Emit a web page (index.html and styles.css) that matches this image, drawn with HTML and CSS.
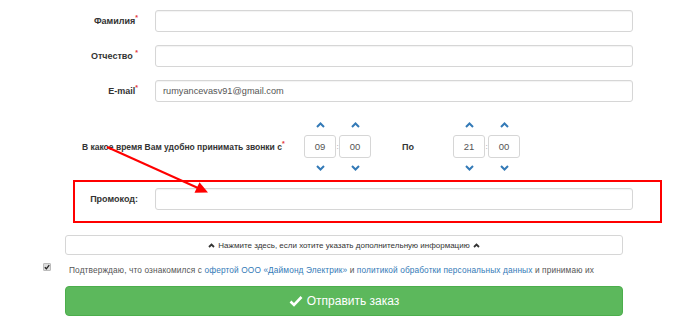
FILE: index.html
```html
<!DOCTYPE html>
<html lang="ru">
<head>
  <meta charset="UTF-8">
  <title>Оформление заказа</title>
  <link rel="stylesheet" href="styles.css">
</head>
<body>
<div class="page">
  <form class="order" onsubmit="return false">
    <div class="row">
      <label class="label" for="last_name">Фамилия<span class="req">*</span></label>
      <input class="field" type="text" id="last_name">
    </div>
    <div class="row">
      <label class="label" for="middle_name">Отчество <span class="req">*</span></label>
      <input class="field" type="text" id="middle_name">
    </div>
    <div class="row">
      <label class="label" for="email">E-mail<span class="req">*</span></label>
      <input class="field" type="text" id="email" value="rumyancevasv91@gmail.com">
    </div>

    <div class="time-row">
      <div class="time-label">В какое время Вам удобно принимать звонки с<span class="req">*</span></div>
      <div class="time-pick">
        <div class="spin">
          <a class="chev"><svg width="9" height="6" viewBox="0 0 9 6"><polyline points="1,5 4.5,1.5 8,5"/></svg></a>
          <input class="time-box" value="09">
          <a class="chev"><svg width="9" height="6" viewBox="0 0 9 6"><polyline points="1,1 4.5,4.5 8,1"/></svg></a>
        </div>
        <span class="colon">:</span>
        <div class="spin">
          <a class="chev"><svg width="9" height="6" viewBox="0 0 9 6"><polyline points="1,5 4.5,1.5 8,5"/></svg></a>
          <input class="time-box" value="00">
          <a class="chev"><svg width="9" height="6" viewBox="0 0 9 6"><polyline points="1,1 4.5,4.5 8,1"/></svg></a>
        </div>
      </div>
      <div class="time-to">По</div>
      <div class="time-pick">
        <div class="spin">
          <a class="chev"><svg width="9" height="6" viewBox="0 0 9 6"><polyline points="1,5 4.5,1.5 8,5"/></svg></a>
          <input class="time-box" value="21">
          <a class="chev"><svg width="9" height="6" viewBox="0 0 9 6"><polyline points="1,1 4.5,4.5 8,1"/></svg></a>
        </div>
        <span class="colon">:</span>
        <div class="spin">
          <a class="chev"><svg width="9" height="6" viewBox="0 0 9 6"><polyline points="1,5 4.5,1.5 8,5"/></svg></a>
          <input class="time-box" value="00">
          <a class="chev"><svg width="9" height="6" viewBox="0 0 9 6"><polyline points="1,1 4.5,4.5 8,1"/></svg></a>
        </div>
      </div>
    </div>

    <div class="promo">
      <div class="row promo-row">
        <label class="label" for="promo">Промокод:</label>
        <input class="field" type="text" id="promo">
      </div>
    </div>

    <button type="button" class="more">
      <svg class="up" width="7" height="5" viewBox="0 0 7 5"><polyline points="1,4 3.5,1.5 6,4"/></svg>
      Нажмите здесь, если хотите указать дополнительную информацию
      <svg class="up" width="7" height="5" viewBox="0 0 7 5"><polyline points="1,4 3.5,1.5 6,4"/></svg>
    </button>

    <div class="agree">
      <span class="check"><svg width="6" height="6" viewBox="0 0 6 6"><polyline points="0.8,3.2 2.4,4.8 5.2,1.2"/></svg></span>
      <span class="agree-text">Подтверждаю, что ознакомился с <a href="#">офертой ООО «Даймонд Электрик»</a> и <a href="#">политикой обработки персональных данных</a> и принимаю их</span>
    </div>

    <button type="submit" class="submit">
      <svg width="14" height="12" viewBox="0 0 14 12"><polyline points="1.5,6.5 5,10 12.5,2"/></svg>
      Отправить заказ
    </button>
  </form>

  <svg class="arrow" width="700" height="331" viewBox="0 0 700 331">
    <line x1="107" y1="147" x2="198" y2="188" stroke="#f00" stroke-width="2"/>
    <polygon points="208,192.5 194.5,192.8 199.5,182.2" fill="#f00"/>
  </svg>
</div>
</body>
</html>
```

FILE: styles.css
```css
body {
  margin: 0;
  font-family: "Liberation Sans", Arial, sans-serif;
  color: #333;
  background: #fff;
}
.page {
  position: relative;
  width: 700px;
  height: 331px;
  overflow: hidden;
}
.order {
  padding-top: 10px;
}
.row {
  display: grid;
  grid-template-columns: 140px 478px;
  column-gap: 15px;
  align-items: center;
  margin-bottom: 13px;
}
.label {
  text-align: right;
  font-weight: bold;
  font-size: 9px;
  padding-right: 2px;
}
.req {
  color: #e4393c;
  font-size: 7px;
  vertical-align: top;
  position: relative;
  top: -2px;
}
.field {
  box-sizing: border-box;
  height: 22px;
  border: 1px solid #d6d6d6;
  border-radius: 3px;
  padding: 0 7px;
  font-family: inherit;
  font-size: 9.2px;
  color: #555;
  box-shadow: inset 0 1px 1px rgba(0,0,0,0.05);
}

.time-row {
  display: flex;
  align-items: center;
  padding-left: 82px;
  margin-bottom: 2px;
}
.time-label {
  width: 222px;
  font-weight: bold;
  font-size: 8.5px;
}
.time-pick {
  display: flex;
  align-items: center;
}
.spin {
  display: flex;
  flex-direction: column;
  align-items: center;
}
.chev {
  display: flex;
  align-items: center;
  justify-content: center;
  height: 20px;
}
.chev polyline {
  fill: none;
  stroke: #337ab7;
  stroke-width: 2;
}
.time-box {
  box-sizing: border-box;
  width: 32px;
  height: 23px;
  border: 1px solid #d6d6d6;
  border-radius: 3px;
  text-align: center;
  font-family: inherit;
  font-size: 9.5px;
  color: #555;
  padding: 0;
}
.colon {
  width: 3px;
  font-size: 8px;
  color: #999;
  text-align: center;
}
.time-to {
  width: 51px;
  padding-left: 31px;
  font-weight: bold;
  font-size: 9px;
}

.promo {
  margin: 0 38px 0 73px;
  border: 2px solid #f00;
  padding: 6px 0 11px;
}
.promo-row {
  grid-template-columns: 65px 478px;
  margin-bottom: 0;
}

.more {
  display: flex;
  align-items: center;
  justify-content: center;
  gap: 3px;
  box-sizing: border-box;
  width: 558px;
  height: 20px;
  margin: 12px 0 0 65px;
  background: #fff;
  border: 1px solid #d6d6d6;
  border-radius: 3px;
  font-family: inherit;
  font-size: 8px;
  color: #333;
  cursor: pointer;
}
.up polyline {
  fill: none;
  stroke: #333;
  stroke-width: 1.8;
}

.agree {
  display: flex;
  align-items: center;
  height: 14px;
  margin-top: 8px;
  padding-left: 43px;
}
.check {
  display: flex;
  align-items: center;
  justify-content: center;
  box-sizing: border-box;
  width: 8px;
  height: 8px;
  background: #ddd;
  border: 1px solid #bbb;
  border-radius: 1px;
  margin-right: 18px;
  position: relative;
  top: -3px;
}
.check polyline {
  fill: none;
  stroke: #222;
  stroke-width: 1.3;
}
.agree-text {
  font-size: 8.3px;
  letter-spacing: 0.12px;
  color: #555;
}
.agree-text a {
  color: #337ab7;
  text-decoration: none;
}

.submit {
  display: flex;
  align-items: center;
  justify-content: center;
  gap: 4px;
  box-sizing: border-box;
  width: 558px;
  height: 30px;
  margin: 9px 0 0 65px;
  background: #5cb85c;
  border: 1px solid #4cae4c;
  border-radius: 4px;
  color: #fff;
  font-family: inherit;
  font-size: 12px;
  cursor: pointer;
}
.submit polyline {
  fill: none;
  stroke: #fff;
  stroke-width: 2.6;
}

.arrow {
  position: absolute;
  left: 0;
  top: 0;
  pointer-events: none;
}
```
